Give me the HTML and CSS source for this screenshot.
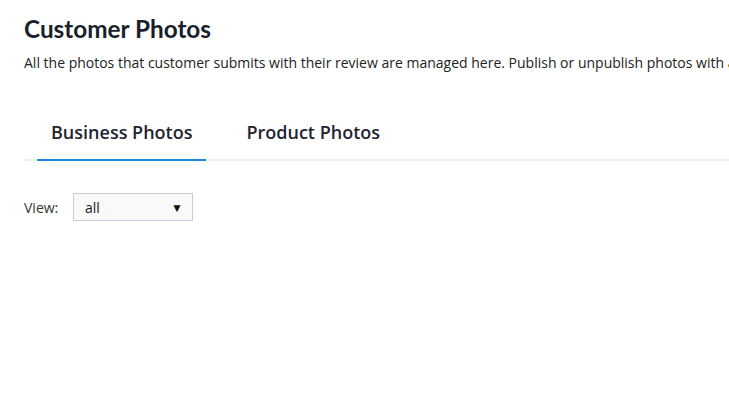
FILE: index.html
```html
<!DOCTYPE html>
<html>
<head>
<meta charset="utf-8">
<link rel="stylesheet" href="styles.css">
</head>
<body>
<div class="page">
  <h1 class="title">Customer Photos</h1>
  <p class="desc">All the photos that customer submits with their review are managed here. Publish or unpublish photos with a single click.</p>
  <div class="tabs">
    <div class="tab active">Business Photos</div>
    <div class="tab">Product Photos</div>
  </div>
  <div class="filter">
    <span class="filter-label">View:</span>
    <div class="select"><span>all</span><span class="arrow">▼</span></div>
  </div>
</div>
</body>
</html>
```
FILE: styles.css
```css
html, body { margin: 0; padding: 0; background: #fff; }
body { overflow: hidden; width: 729px; height: 418px; }
.page { padding: 14px 0 0 24px; font-family: "Open Sans", sans-serif; color: #222; }
.title { margin: 0; font-family: Lato, sans-serif; font-weight: 700; font-size: 24.3px; line-height: 30px; color: #1a1f2b; }
.desc { margin: 9px 0 0; font-size: 14px; line-height: 19px; white-space: nowrap; overflow: hidden; color: #222; }
.tabs { display: flex; margin-top: 33px; border-bottom: 2px solid #f1f1f1; gap: 26px; }
.tab { padding: 1px 14px 0; font-size: 18px; font-weight: 600; color: #1f2430; height: 53px; line-height: 53px; margin-bottom: -2px; border-bottom: 2px solid transparent; }
.tab.active { border-bottom-color: #1e88e5; margin-left: 13px; }
.filter { display: flex; align-items: center; margin-top: 32px; }
.filter-label { font-size: 14px; width: 49px; color: #333; }
.select { box-sizing: border-box; width: 120px; height: 28px; border: 1px solid #c4ced8; background: #f9f9f9; display: flex; align-items: center; justify-content: space-between; padding: 0 9px 0 11px; font-size: 14px; color: #222; }
.arrow { font-size: 12px; color: #111; }
```
